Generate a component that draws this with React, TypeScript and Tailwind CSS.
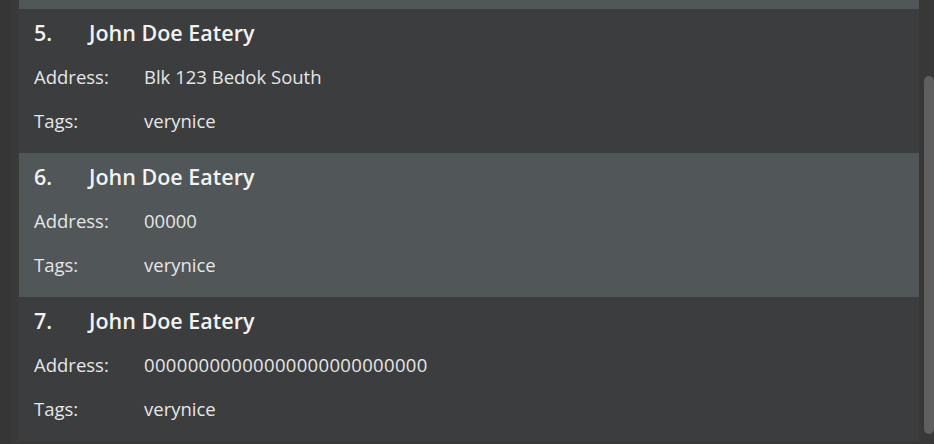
import React from "react";

type Item = { n: number; name: string; address: string; tags: string; selected?: boolean; wide?: boolean };

const items: Item[] = [
  { n: 5, name: "John Doe Eatery", address: "Blk 123 Bedok South", tags: "verynice" },
  { n: 6, name: "John Doe Eatery", address: "00000", tags: "verynice", selected: true },
  { n: 7, name: "John Doe Eatery", address: "00000000000000000000000000", tags: "verynice", wide: true },
];

function Card({ item }: { item: Item }) {
  return (
    <div
      className={
        "h-[144px] shrink-0 flex flex-col pt-[2px] pl-[15px] " +
        (item.selected ? "bg-[#515658]" : "bg-[#3c3d3f]")
      }
    >
      <div className="h-[44px] flex items-center text-[21.5px] font-semibold text-[#f2f2f2]">
        <span className="w-[55px]">{item.n}.</span>
        <span>{item.name}</span>
      </div>
      <div className="h-[44px] flex items-center text-[18.5px] text-[#e6e6e6]">
        <span className="w-[110px]">Address:</span>
        <span className={item.wide ? "tracking-[0.33px]" : ""}>{item.address}</span>
      </div>
      <div className="h-[44px] flex items-center text-[18.5px] text-[#e6e6e6]">
        <span className="w-[110px]">Tags:</span>
        <span>{item.tags}</span>
      </div>
    </div>
  );
}

export default function App() {
  return (
    <div
      className="w-[934px] h-[444px] flex bg-[#383838] overflow-hidden"
      style={{ fontFamily: '"Open Sans", "Noto Sans", sans-serif' }}
    >
      <div className="w-[19px] shrink-0 flex">
        <div className="w-[11px] bg-[#363636]" />
        <div className="w-[8px] bg-[#3a3a3a]" />
      </div>
      <div className="w-[900px] shrink-0 flex flex-col">
        <div className="h-[9px] shrink-0 bg-[#515658]" />
        {items.map((it) => (
          <Card key={it.n} item={it} />
        ))}
      </div>
      <div className="w-[15px] shrink-0 pt-[76px] pl-[5px]">
        <div className="w-[10px] h-[358px] rounded-[5px] bg-[#5f5f5f]" />
      </div>
    </div>
  );
}
